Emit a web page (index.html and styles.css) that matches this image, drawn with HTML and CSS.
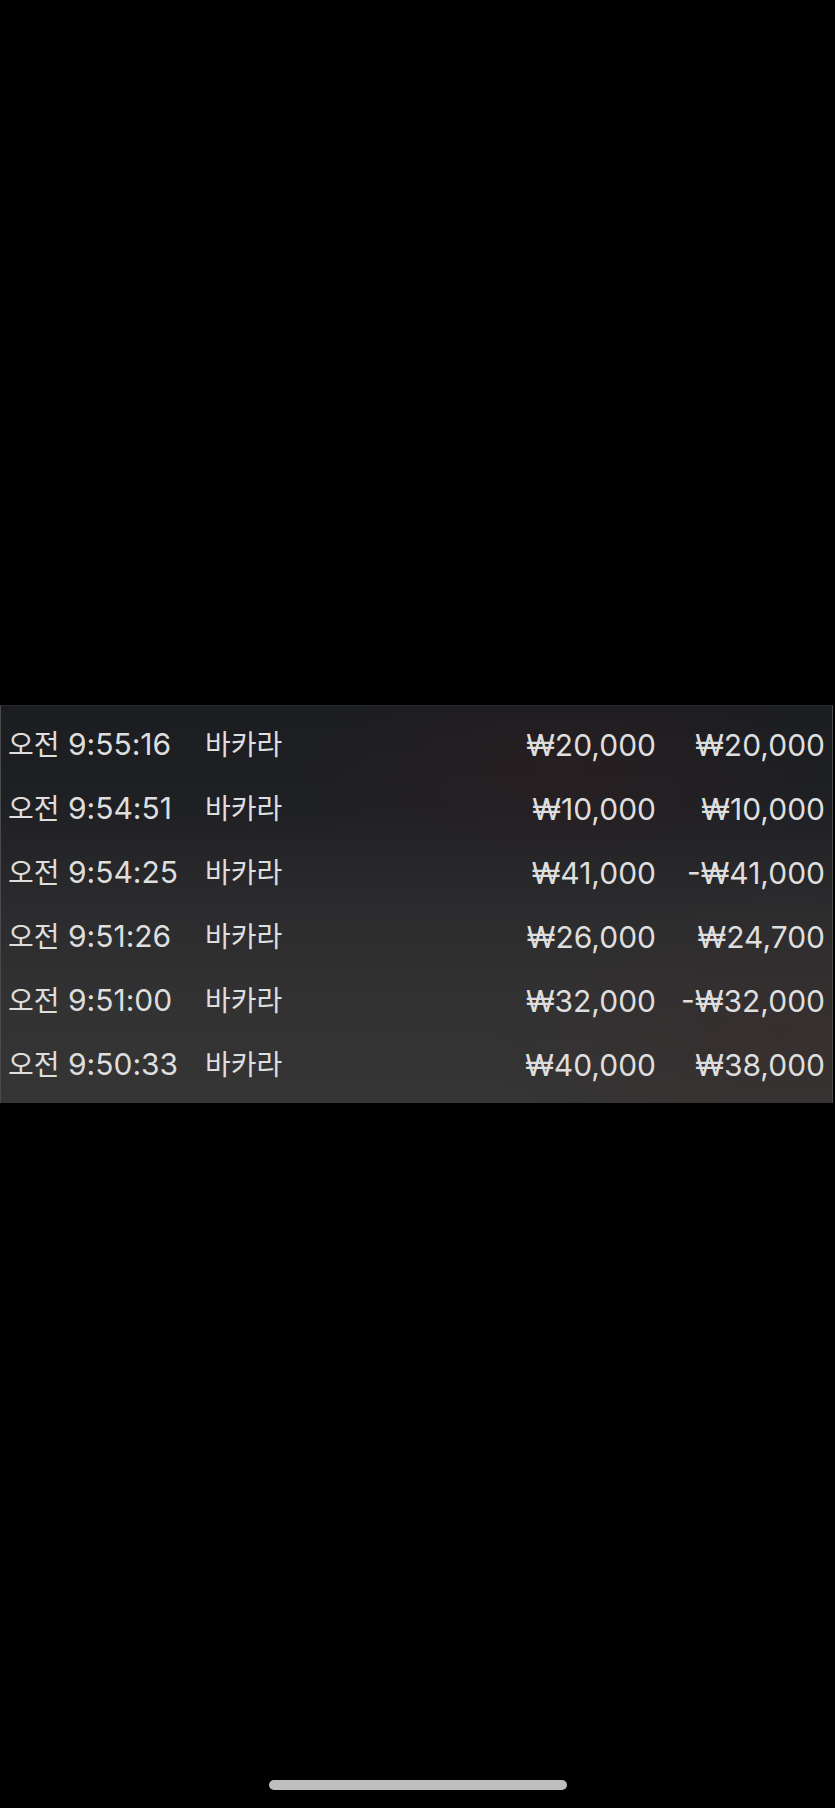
FILE: index.html
```html
<!DOCTYPE html>
<html lang="ko">
<head>
<meta charset="utf-8">
<link rel="stylesheet" href="styles.css">
</head>
<body>
<div class="screen">
  <section class="panel">
    <div class="row"><span class="time"><span class="ko">오전</span> 9:55:16</span><span class="ko">바카라</span><span class="amt">₩20,000</span><span class="amt">₩20,000</span></div>
    <div class="row"><span class="time"><span class="ko">오전</span> 9:54:51</span><span class="ko">바카라</span><span class="amt">₩10,000</span><span class="amt">₩10,000</span></div>
    <div class="row"><span class="time"><span class="ko">오전</span> 9:54:25</span><span class="ko">바카라</span><span class="amt">₩41,000</span><span class="amt">-₩41,000</span></div>
    <div class="row"><span class="time"><span class="ko">오전</span> 9:51:26</span><span class="ko">바카라</span><span class="amt">₩26,000</span><span class="amt">₩24,700</span></div>
    <div class="row"><span class="time"><span class="ko">오전</span> 9:51:00</span><span class="ko">바카라</span><span class="amt">₩32,000</span><span class="amt">-₩32,000</span></div>
    <div class="row"><span class="time"><span class="ko">오전</span> 9:50:33</span><span class="ko">바카라</span><span class="amt">₩40,000</span><span class="amt">₩38,000</span></div>
  </section>
  <div class="home-indicator"></div>
</div>
</body>
</html>
```
FILE: styles.css
```css
html, body {
  margin: 0;
  padding: 0;
  background: #000;
}
.screen {
  width: 835px;
  height: 1808px;
  display: flex;
  flex-direction: column;
  align-items: center;
  overflow: hidden;
}
.panel {
  margin-top: 705px;
  width: 833px;
  align-self: flex-start;
  box-sizing: border-box;
  padding: 6px 7px 7px 7px;
  border-left: 1px solid #4a4a4c;
  border-right: 1px solid #4a4a4c;
  border-top: 1px solid #26272a;
  background:
    radial-gradient(ellipse 260px 120px at 560px 60px, rgba(60, 30, 30, 0.3), rgba(60, 30, 30, 0) 100%),
    radial-gradient(ellipse 300px 140px at 780px 330px, rgba(60, 40, 38, 0.35), rgba(60, 40, 38, 0) 100%),
    linear-gradient(180deg, #1b1d21 0%, #1f2024 25%, #2b2b2d 50%, #323233 75%, #353535 100%);
  font-family: Inter, "Noto Sans CJK KR", sans-serif;
  font-size: 30px;
  color: #dedede;
}
.row {
  display: grid;
  grid-template-columns: 197px 1fr 202px 169px;
  align-items: center;
  height: 64px;
  line-height: 64px;
  white-space: nowrap;
}
.ko {
  font-size: 28px;
}
.amt {
  text-align: right;
}
.home-indicator {
  margin-top: auto;
  margin-bottom: 18px;
  width: 298px;
  height: 10px;
  border-radius: 5px;
  background: #bebebe;
}
```
